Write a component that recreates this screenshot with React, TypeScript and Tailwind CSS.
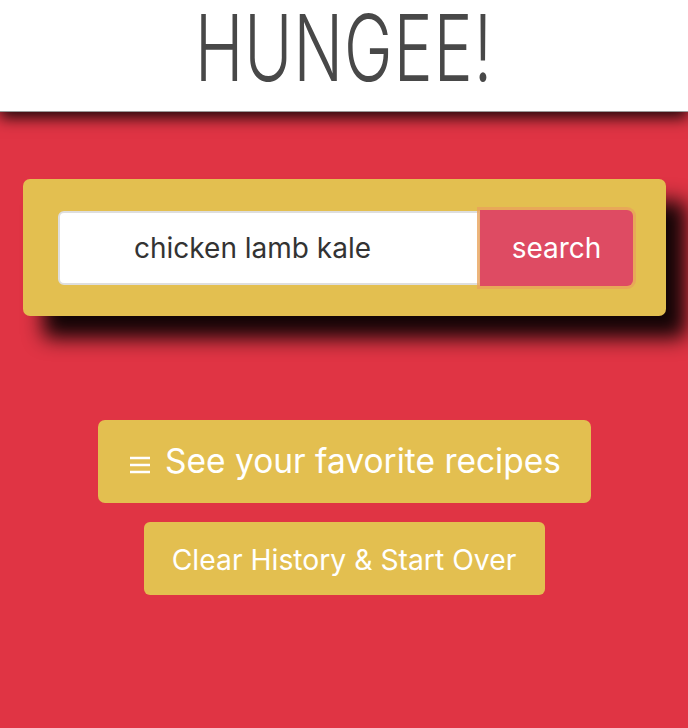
import React from "react";

export default function App() {
  return (
    <div className="min-h-[728px] w-full bg-[#e03444]" style={{ fontFamily: "Inter, 'Noto Sans', sans-serif" }}>
      <header className="relative z-10 h-[112px] bg-white border-b border-[#9a9a9a] shadow-[0_6px_14px_rgba(0,0,0,0.85)] flex items-start justify-center pt-[2px]">
        <h1
          className="text-[#484848] text-[92px] font-light leading-none tracking-[1.5px] scale-x-[0.71] whitespace-nowrap"
          style={{ fontFamily: "Inter, 'DejaVu Sans', sans-serif" }}
        >
          HUNGEE!
        </h1>
      </header>
      <main className="flex flex-col items-center">
        <div className="mt-[67px] w-[643px] ml-px h-[137px] rounded-[7px] bg-[#e3bf50] shadow-[20px_22px_20px_rgba(0,0,0,0.92)] flex items-center pl-[35px] pr-[33px]">
          <div className="flex flex-1 items-center">
            <div className="h-[74px] flex-1 bg-white border-2 border-[#dedede] rounded-l-[6px] flex items-center pl-[74px] text-[28px] text-[#333]">
              chicken lamb kale
            </div>
            <button className="h-[76px] w-[153px] -ml-px bg-[#de4b63] rounded-r-[6px] ring-[3px] ring-[#e8a35a]/80 text-white text-[28px] flex items-center justify-center">
              search
            </button>
          </div>
        </div>
        <button className="mt-[104px] w-[493px] h-[83px] rounded-[7px] bg-[#e3bf50] text-white text-[33.5px] flex items-center justify-center gap-[14px] pl-[2px]">
          <svg width="22" height="18" viewBox="0 0 22 18" className="mt-[6px]">
            <line x1="1" y1="2" x2="21" y2="2" stroke="white" strokeWidth="2.5" />
            <line x1="1" y1="9" x2="21" y2="9" stroke="white" strokeWidth="2.5" />
            <line x1="1" y1="16" x2="21" y2="16" stroke="white" strokeWidth="2.5" />
          </svg>
          <span>See your favorite recipes</span>
        </button>
        <button className="mt-[19px] w-[401px] h-[73px] rounded-[6px] bg-[#e3bf50] text-white text-[28.3px] flex items-center justify-center pt-[4px]">
          Clear History &amp; Start Over
        </button>
      </main>
    </div>
  );
}
